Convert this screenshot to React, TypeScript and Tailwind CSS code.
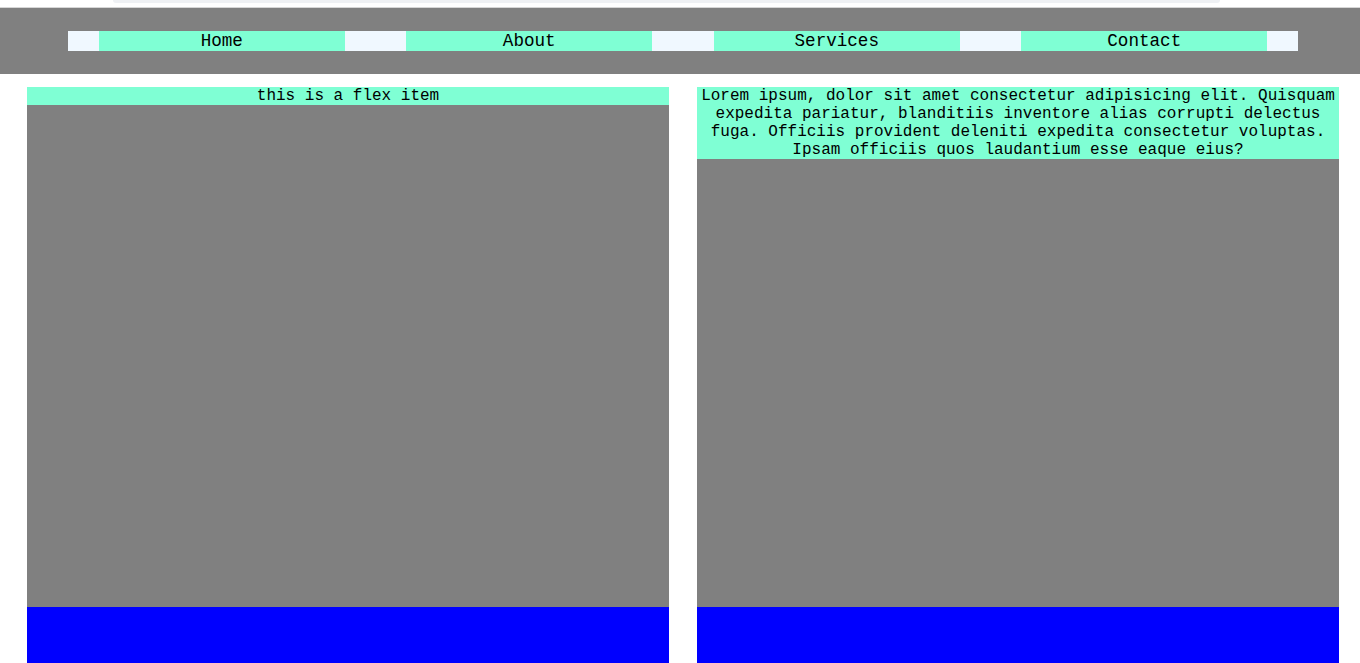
const items = ['Home', 'About', 'Services', 'Contact'];

const lorem =
  'Lorem ipsum, dolor sit amet consectetur adipisicing elit. Quisquam expedita pariatur, blanditiis inventore alias corrupti delectus fuga. Officiis provident deleniti expedita consectetur voluptas. Ipsam officiis quos laudantium esse eaque eius?';

function FlexItem({ text }: { text: string }) {
  return (
    <div className="flex w-[642px] flex-col">
      <p className="bg-[#7fffd4] text-center text-[16px] leading-[18px]">{text}</p>
      <div className="flex-1 bg-[#808080]"></div>
      <div className="h-[56px] bg-[#0000ff]"></div>
    </div>
  );
}

export default function App() {
  return (
    <div
      className="h-[663px] overflow-hidden bg-white text-black"
      style={{ fontFamily: '"Liberation Mono", "Courier New", monospace' }}
    >
      {/* leftover of the page above */}
      <div className="h-[7px] bg-white pl-[113px] pr-[140px]">
        <div className="h-[3px] rounded-b-lg bg-[#eff1f4]"></div>
      </div>
      <div className="h-px bg-[#d6d6d6]"></div>

      <nav className="bg-[#808080] pt-[23px] pb-[23px]">
        <ul className="ml-[68px] flex w-[1230px] justify-around bg-[#f0f8ff]">
          {items.map((item) => (
            <li key={item} className="w-[246px] bg-[#7fffd4] text-center text-[17.6px] leading-[20px]">
              {item}
            </li>
          ))}
        </ul>
      </nav>

      <main className="mt-[13px] ml-[27px] flex h-[576px] gap-[28px]">
        <FlexItem text="this is a flex item" />
        <FlexItem text={lorem} />
      </main>
    </div>
  );
}
